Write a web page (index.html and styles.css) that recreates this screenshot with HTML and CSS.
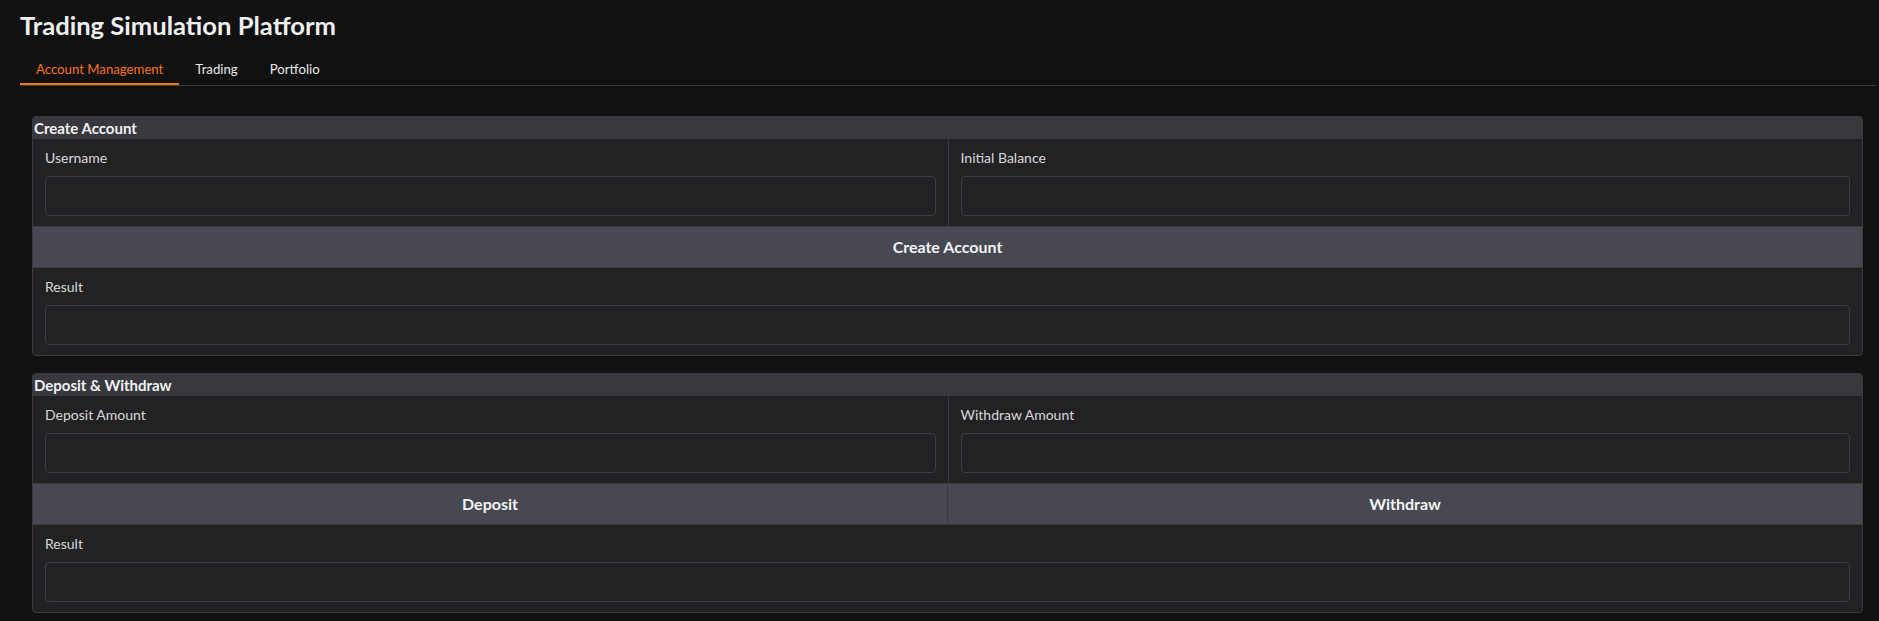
FILE: index.html
```html
<!DOCTYPE html>
<html>
<head>
<meta charset="utf-8">
<link rel="stylesheet" href="styles.css">
</head>
<body>
<div class="app">
  <h1 class="title">Trading Simulation Platform</h1>
  <div class="tabs">
    <div class="tab active">Account Management</div>
    <div class="tab">Trading</div>
    <div class="tab">Portfolio</div>
  </div>
  <div class="panel">
    <div class="box">
      <div class="box-head">Create Account</div>
      <div class="row">
        <div class="field"><div class="label">Username</div><div class="input"></div></div>
        <div class="field"><div class="label">Initial Balance</div><div class="input"></div></div>
      </div>
      <div class="btn-row">
        <div class="btn">Create Account</div>
      </div>
      <div class="field"><div class="label">Result</div><div class="input small"></div></div>
    </div>
    <div class="box">
      <div class="box-head">Deposit &amp; Withdraw</div>
      <div class="row">
        <div class="field"><div class="label">Deposit Amount</div><div class="input"></div></div>
        <div class="field"><div class="label">Withdraw Amount</div><div class="input"></div></div>
      </div>
      <div class="btn-row">
        <div class="btn">Deposit</div>
        <div class="btn">Withdraw</div>
      </div>
      <div class="field"><div class="label">Result</div><div class="input small"></div></div>
    </div>
  </div>
</div>
</body>
</html>
```
FILE: styles.css
```css
html, body {
  margin: 0;
  padding: 0;
  background: #111111;
  font-family: Lato, "Noto Sans", sans-serif;
  color: #e8e8e8;
}
.app {
  padding: 0 3px 0 20px;
}
.title {
  margin: 0;
  padding-top: 9px;
  height: 40px;
  font-size: 25.6px;
  font-weight: 700;
  line-height: 32px;
  color: #f0f0f0;
}
.tabs {
  display: flex;
  border-bottom: 1px solid #3a3a40;
  height: 36px;
}
.tab {
  padding: 5px 16px 0 16px;
  line-height: 30px;
  font-size: 13.2px;
  color: #e8e8e8;
  border-bottom: 2px solid transparent;
}
.tab.active {
  color: #f97316;
  border-bottom-color: #f97316;
}
.panel {
  padding: 30px 13px 0 12px;
  display: flex;
  flex-direction: column;
  gap: 17px;
}
.box {
  background: #222225;
  border: 1px solid #3a3a40;
  border-radius: 4px;
  overflow: hidden;
}
.box-head {
  background: #38383f;
  height: 22px;
  line-height: 22px;
  font-size: 15px;
  font-weight: 700;
  color: #f2f2f2;
  padding-left: 1px;
}
.row {
  display: grid;
  grid-template-columns: 1fr 1fr;
}
.row .field + .field {
  border-left: 1px solid #3a3a40;
}
.field {
  padding: 10px 12px 10px 12px;
}
.label {
  font-size: 14px;
  line-height: 18px;
  color: #d8d8d8;
  margin-bottom: 9px;
}
.input {
  height: 38px;
  border: 1px solid #3d3d43;
  border-radius: 4px;
  background: #222225;
}
.input.small {
  height: 38px;
}
.btn-row {
  display: flex;
  background: #484852;
  border-top: 1px solid #3a3a40;
  border-bottom: 1px solid #3a3a40;
}
.btn {
  flex: 1;
  height: 40px;
  line-height: 40px;
  text-align: center;
  font-size: 16px;
  font-weight: 700;
  color: #f4f4f4;
}
.btn + .btn {
  border-left: 1px solid #3a3a40;
}
```
